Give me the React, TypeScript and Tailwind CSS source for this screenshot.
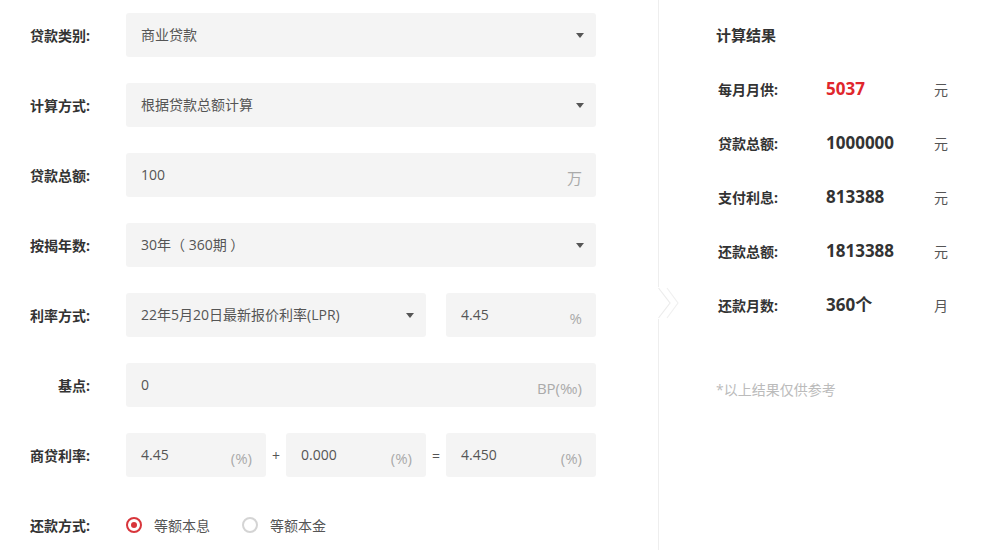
import React from "react";

const Label = ({ children }: { children: React.ReactNode }) => (
  <div className="w-[90px] shrink-0 text-right text-[14px] font-bold text-[#333]">{children}</div>
);

const Arrow = () => (
  <svg width="8" height="5" viewBox="0 0 8 5" className="shrink-0">
    <polygon points="0,0 8,0 4,5" fill="#555" />
  </svg>
);

const Select = ({ text, w }: { text: string; w: string }) => (
  <div className={`${w} h-[44px] bg-[#f4f4f4] rounded-[3px] flex items-center justify-between pl-[15px] pr-[12px] text-[14px] text-[#555]`}>
    <span className="-mt-[2px]">{text}</span>
    <Arrow />
  </div>
);

const Input = ({ text, unit, w }: { text: string; unit: string; w: string }) => (
  <div className={`${w} h-[44px] bg-[#f4f4f4] rounded-[3px] flex items-center justify-between pl-[15px] pr-[14px] text-[14px]`}>
    <span className="text-[#555] -mt-[2px]">{text}</span>
    <span className="text-[#aaa] text-[15px] mt-[6px]">{unit}</span>
  </div>
);

const Row = ({ label, children }: { label: string; children: React.ReactNode }) => (
  <div className="flex items-center h-[44px]">
    <Label>{label}</Label>
    <div className="ml-[36px] flex items-center">{children}</div>
  </div>
);

const ResultRow = ({ label, value, unit, red }: { label: string; value: string; unit: string; red?: boolean }) => (
  <div className="h-[54px] flex items-center">
    <div className="w-[110px] pl-[2px] text-[14px] font-bold text-[#333]">{label}</div>
    <div className={`w-[108px] text-[17px] font-bold ${red ? "text-[#e0262c]" : "text-[#333]"}`}>{value}</div>
    <div className="text-[14px] text-[#555]">{unit}</div>
  </div>
);

const Radio = ({ on, label }: { on?: boolean; label: string }) => (
  <div className="flex items-center">
    <div
      className={`w-[16px] h-[16px] rounded-full border-2 flex items-center justify-center ${on ? "border-[#d8353b]" : "border-[#d4d4d4]"}`}
    >
      {on && <div className="w-[6px] h-[6px] rounded-full bg-[#d8353b]" />}
    </div>
    <span className="ml-[12px] text-[14px] text-[#555]">{label}</span>
  </div>
);

export default function App() {
  return (
    <div className="w-[996px] h-[550px] bg-white flex font-['Open_Sans','Noto_Sans_CJK_SC',sans-serif] overflow-hidden">
      <div className="w-[658px] shrink-0 pt-[13px] flex flex-col gap-[26px]">
        <Row label="贷款类别:">
          <Select text="商业贷款" w="w-[470px]" />
        </Row>
        <Row label="计算方式:">
          <Select text="根据贷款总额计算" w="w-[470px]" />
        </Row>
        <Row label="贷款总额:">
          <Input text="100" unit="万" w="w-[470px]" />
        </Row>
        <Row label="按揭年数:">
          <Select text="30年（ 360期 ）" w="w-[470px]" />
        </Row>
        <Row label="利率方式:">
          <Select text="22年5月20日最新报价利率(LPR)" w="w-[300px]" />
          <div className="w-[20px]" />
          <Input text="4.45" unit="%" w="w-[150px]" />
        </Row>
        <Row label="基点:">
          <Input text="0" unit="BP(‰)" w="w-[470px]" />
        </Row>
        <Row label="商贷利率:">
          <Input text="4.45" unit="(%)" w="w-[140px]" />
          <div className="w-[20px] text-center text-[14px] text-[#555]">+</div>
          <Input text="0.000" unit="(%)" w="w-[140px]" />
          <div className="w-[20px] text-center text-[14px] text-[#555]">=</div>
          <Input text="4.450" unit="(%)" w="w-[150px]" />
        </Row>
        <Row label="还款方式:">
          <Radio on label="等额本息" />
          <div className="w-[32px]" />
          <Radio label="等额本金" />
        </Row>
      </div>
      <div className="relative w-px shrink-0 bg-[#eee]">
        <svg width="26" height="32" viewBox="0 0 26 32" className="absolute left-0 top-[287px]">
          <rect x="0" y="0" width="2" height="32" fill="#fff" />
          <polyline points="0.5,1 12,16 0.5,31" fill="none" stroke="#ececec" strokeWidth="1.2" />
          <polyline points="9,1 20,16 9,31" fill="none" stroke="#f0f0f0" strokeWidth="1.2" />
        </svg>
      </div>
      <div className="flex-1 pl-[57px] pt-[8px] flex flex-col">
        <div className="h-[54px] flex items-center text-[15px] font-bold text-[#333]">计算结果</div>
        <ResultRow label="每月月供:" value="5037" unit="元" red />
        <ResultRow label="贷款总额:" value="1000000" unit="元" />
        <ResultRow label="支付利息:" value="813388" unit="元" />
        <ResultRow label="还款总额:" value="1813388" unit="元" />
        <ResultRow label="还款月数:" value="360个" unit="月" />
        <div className="mt-[48px] text-[14px] text-[#bbb] leading-[20px]">*以上结果仅供参考</div>
      </div>
    </div>
  );
}
